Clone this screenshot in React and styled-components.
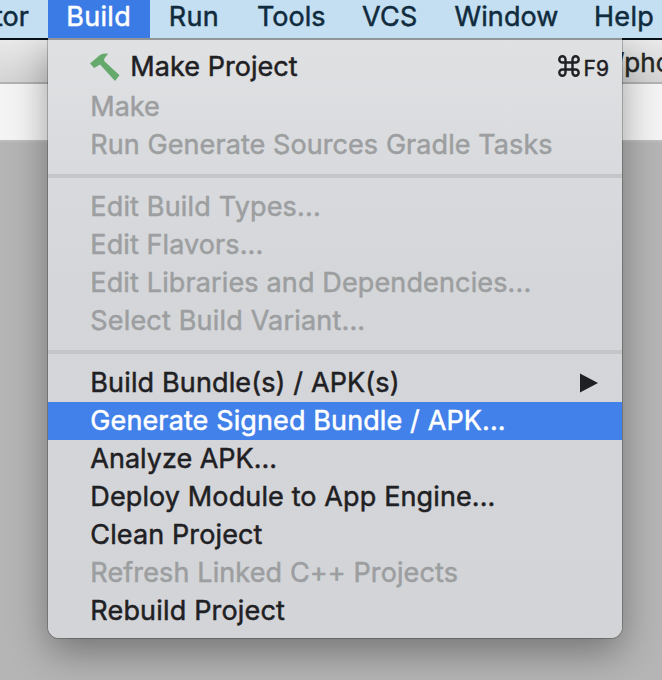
import React from "react";
import styled, { createGlobalStyle } from "styled-components";

const GlobalStyle = createGlobalStyle`
  * { box-sizing: border-box; }
  html, body { margin: 0; padding: 0; overflow: hidden; }
  body { font-family: Inter, "Liberation Sans", sans-serif; -webkit-font-smoothing: antialiased; }
`;

const Desktop = styled.div`
  position: relative;
  display: flex;
  flex-direction: column;
  width: 662px;
  height: 680px;
  overflow: hidden;
  background: #b5b5b5;
`;

const MenuBar = styled.nav`
  position: relative;
  z-index: 3;
  flex: none;
  display: flex;
  height: 40px;
  background: #c3dff1;
  border-bottom: 2px solid #061019;
`;

const BarItem = styled.div`
  flex: none;
  width: ${(p) => p.$width}px;
  height: 38px;
  text-indent: ${(p) => p.$inset}px;
  font-size: 27px;
  font-weight: 400;
  -webkit-text-stroke: 0.5px currentColor;
  line-height: 33px;
  letter-spacing: ${(p) => p.$track || 0}px;
  white-space: nowrap;
  color: ${(p) => (p.$open ? "#fff" : "#102b3d")};
  background: ${(p) => (p.$open ? "#3b7be5" : "transparent")};
`;

const WindowTitle = styled.header`
  flex: none;
  display: flex;
  justify-content: flex-end;
  height: 44px;
  border-bottom: 2px solid #b2b2b2;
  background: linear-gradient(#e9e9e9, #d4d4d4);
  font-size: 26px;
  line-height: 46px;
  color: #272727;
`;

const PathText = styled.span`
  width: 47px;
  white-space: nowrap;
  -webkit-text-stroke: 0.5px currentColor;
`;

const TabStrip = styled.div`
  flex: none;
  height: 58px;
  background: #f4f4f4;
  border-bottom: 2px solid #bdbdbd;
`;

const Menu = styled.div`
  position: absolute;
  z-index: 2;
  top: 38px;
  left: 48px;
  width: 574px;
  height: 600px;
  padding-top: 10px;
  border-radius: 0 0 11px 11px;
  background: linear-gradient(#dfe1e3 0, #d9dbde 110px, #d4d6d9 240px, #d2d4d7 100%);
  box-shadow: 0 0 0 1px rgba(0, 0, 0, 0.22), 0 14px 38px rgba(0, 0, 0, 0.36);
`;

const MenuEdge = styled.div`
  position: absolute;
  z-index: 4;
  top: 38px;
  left: 48px;
  width: 574px;
  height: 2px;
  background: #929598;
`;

const MenuRow = styled.div`
  display: flex;
  align-items: center;
  height: ${(p) => (p.$tall ? 40 : 38)}px;
  padding: 0 13px ${(p) => (p.$tall ? 4 : 2)}px 42px;
  font-size: 27px;
  color: ${(p) => (p.$active ? "#fff" : p.$disabled ? "#9c9ea0" : "#1f2023")};
  background: ${(p) => (p.$active ? "#4381ea" : "transparent")};
`;

const Label = styled.span`
  flex: 1;
  padding-left: 0.3px;
  white-space: nowrap;
  letter-spacing: ${(p) => p.$track || 0}px;
  -webkit-text-stroke: 0.5px currentColor;
`;

const Separator = styled.div`
  height: 24px;
  padding: 10px 0;
  &::before {
    content: "";
    display: block;
    height: 4px;
    background: #c4c6c8;
  }
`;

const HammerIcon = styled.svg`
  flex: none;
  width: 32px;
  height: 32px;
  margin: 3px 9px 0 -1px;
`;

const Shortcut = styled.span`
  display: flex;
  align-items: center;
  font-size: 21px;
  -webkit-text-stroke: 0.5px currentColor;
  svg { width: 24px; height: 24px; margin: 0 3px 1px 0; }
  span { padding-top: 5px; }
`;

const Arrow = styled.svg`
  width: 19px;
  height: 20px;
  margin: 2px 11px 0 0;
`;

function Hammer() {
  return (
    <HammerIcon viewBox="0 0 32 32">
      <path
        fill="#65a96d"
        d="M1 11.5 L11.3 2.7 Q15 1 19.2 1.7 L17 4.2 Q14.8 6.4 15.2 9 L30.5 23.2 L26 29 L11 12.6 L5.2 16 Z"
      />
    </HammerIcon>
  );
}

function CommandGlyph() {
  return (
    <svg viewBox="0 0 24 24" fill="none" stroke="currentColor" strokeWidth="2.4">
      <path d="M8.5 8.5H15.5V15.5H8.5ZM8.5 8.5V5.4A3.1 3.1 0 1 0 5.4 8.5H8.5ZM15.5 8.5H18.6A3.1 3.1 0 1 0 15.5 5.4V8.5ZM15.5 15.5V18.6A3.1 3.1 0 1 0 18.6 15.5H15.5ZM8.5 15.5H5.4A3.1 3.1 0 1 0 8.5 18.6V15.5Z" />
    </svg>
  );
}

const barItems = [
  { text: "tor", width: 48, inset: -6 },
  { text: "Build", width: 102, inset: 18.3, track: 0.3 },
  { text: "Run", width: 88, inset: 18.8, track: 0.3 },
  { text: "Tools", width: 106, inset: 19 },
  { text: "VCS", width: 92, inset: 18, track: 0.3 },
  { text: "Window", width: 139, inset: 18.5, track: 0.1 },
  { text: "Help", width: 87, inset: 19, track: 0.3 },
];

const groups = [
  [
    { text: "Make Project", hammer: true, tall: true, shortcut: "F9", track: 0.05 },
    { text: "Make", disabled: true },
    { text: "Run Generate Sources Gradle Tasks", disabled: true, track: 0.08 },
  ],
  [
    { text: "Edit Build Types...", disabled: true, track: 0.17 },
    { text: "Edit Flavors...", disabled: true, track: 0.1 },
    { text: "Edit Libraries and Dependencies...", disabled: true, track: 0.14 },
    { text: "Select Build Variant...", disabled: true, track: 0.18 },
  ],
  [
    { text: "Build Bundle(s) / APK(s)", submenu: true, track: 0.14 },
    { text: "Generate Signed Bundle / APK...", active: true, track: 0.12 },
    { text: "Analyze APK...", track: 0 },
    { text: "Deploy Module to App Engine...", track: 0.12 },
    { text: "Clean Project", track: 0.12 },
    { text: "Refresh Linked C++ Projects", disabled: true, track: 0.12 },
    { text: "Rebuild Project", track: 0.18 },
  ],
];

function Row({ item }) {
  return (
    <MenuRow $tall={item.tall} $disabled={item.disabled} $active={item.active}>
      {item.hammer && <Hammer />}
      <Label $track={item.track}>{item.text}</Label>
      {item.shortcut && (
        <Shortcut>
          <CommandGlyph />
          <span>{item.shortcut}</span>
        </Shortcut>
      )}
      {item.submenu && (
        <Arrow viewBox="0 0 19 20">
          <path d="M1 0.5 L19 10 L1 19.5 Z" fill="#1f2023" />
        </Arrow>
      )}
    </MenuRow>
  );
}

export default function App() {
  return (
    <>
      <GlobalStyle />
      <Desktop>
        <MenuBar>
          {barItems.map((b) => (
            <BarItem
              key={b.text}
              $width={b.width}
              $inset={b.inset}
              $open={b.text === "Build"}
              $track={b.track}
            >
              {b.text}
            </BarItem>
          ))}
        </MenuBar>
        <WindowTitle>
          <PathText>/pho</PathText>
        </WindowTitle>
        <TabStrip />
        <Menu>
          {groups.map((items, i) => (
            <React.Fragment key={i}>
              {i > 0 && <Separator />}
              {items.map((item) => (
                <Row key={item.text} item={item} />
              ))}
            </React.Fragment>
          ))}
        </Menu>
        <MenuEdge />
      </Desktop>
    </>
  );
}
